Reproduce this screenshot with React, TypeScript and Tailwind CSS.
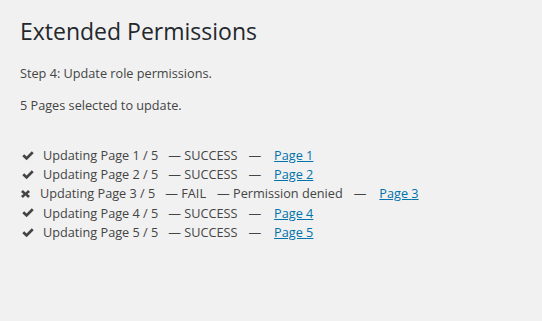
import React from "react";

const Check = () => (
  <svg width="12" height="10" viewBox="0 0 12 10" className="shrink-0">
    <path d="M0.3 5.2 L2.2 3.3 L4.6 5.6 L9.8 0.3 L11.7 2.2 L4.6 9.3 Z" fill="#444" />
  </svg>
);

const Cross = () => (
  <svg width="9" height="8" viewBox="0 0 9 8" className="shrink-0">
    <path d="M0 1.9 L1.9 0 L4.5 2.4 L7.1 0 L9 1.9 L6.5 4 L9 6.1 L7.1 8 L4.5 5.6 L1.9 8 L0 6.1 L2.5 4 Z" fill="#444" />
  </svg>
);

const rows = [
  { n: 1, ok: true },
  { n: 2, ok: true },
  { n: 3, ok: false },
  { n: 4, ok: true },
  { n: 5, ok: true },
];

export default function App() {
  return (
    <div
      className="min-h-[321px] w-full bg-[#f1f1f1] text-[#444] text-[12.7px] leading-[19.5px]"
      style={{ fontFamily: '"Open Sans", "Noto Sans", sans-serif' }}
    >
      <div className="px-[20px] pt-[16px]">
        <h1 className="text-[23px] font-normal leading-[30px] text-[#23282d]">Extended Permissions</h1>
        <p className="mt-[18px]">Step 4: Update role permissions.</p>
        <p className="mt-[12px]">5 Pages selected to update.</p>
        <ul className="mt-[31px] flex flex-col">
          {rows.map((r) => (
            <li key={r.n} className="flex items-center h-[19.25px] whitespace-pre">
              {r.ok ? (
                <span className="flex w-[23px] pl-[2px]"><Check /></span>
              ) : (
                <span className="flex w-[20px] pl-[1px]"><Cross /></span>
              )}
              <span>Updating Page {r.n} / 5</span>
              {r.ok ? (
                <>
                  <span className="ml-[10px]">— SUCCESS</span>
                  <span className="ml-[11px]">—</span>
                </>
              ) : (
                <>
                  <span className="ml-[10px]">— FAIL</span>
                  <span className="ml-[11px]">— Permission denied</span>
                  <span className="ml-[11px]">—</span>
                </>
              )}
              <a href="#" className="ml-[13px] text-[#0073aa] underline">Page {r.n}</a>
            </li>
          ))}
        </ul>
      </div>
    </div>
  );
}
